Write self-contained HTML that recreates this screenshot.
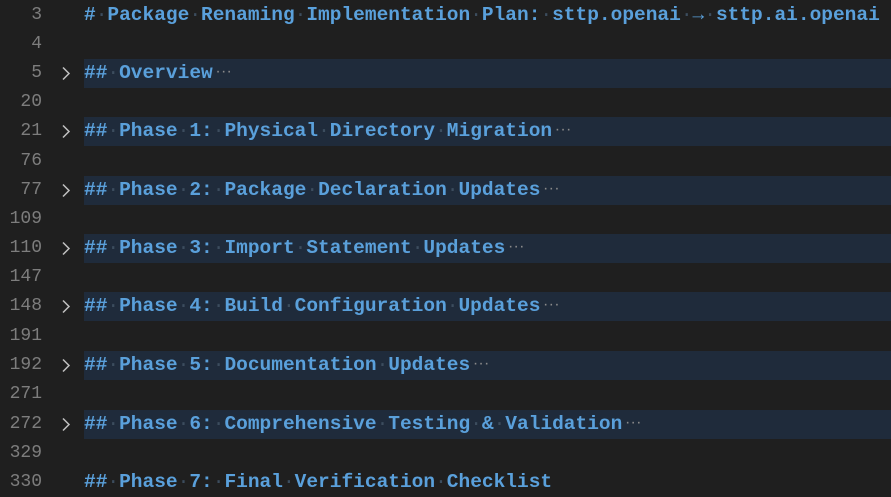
<!DOCTYPE html>
<html><head><style>
body{margin:0;width:891px;height:496px;background:#1f1f1f;overflow:hidden;font-family:"Liberation Mono",monospace;}
.r{position:absolute;left:0;width:891px;height:29px;}
.n{position:absolute;right:849px;top:0;line-height:29px;font-size:18px;color:#7d7d7d;}
.c{position:absolute;left:59px;top:7px;width:14px;height:15px;}
.t{position:absolute;left:84px;top:0;right:0;height:29px;line-height:29px;font-size:19.5px;font-weight:bold;color:#5aa0db;white-space:pre;}
.b{background:#1f2b3b;}
.d{color:#3c4d5e;font-weight:normal;}
.e{color:#8a8a8a;font-size:11px;font-weight:bold;vertical-align:3px;margin-left:2px;letter-spacing:-1px;}
</style></head><body>
<div class="r" style="top:1px"><span class="n">3</span><div class="t">#<span class="d">·</span>Package<span class="d">·</span>Renaming<span class="d">·</span>Implementation<span class="d">·</span>Plan:<span class="d">·</span>sttp.openai<span class="d">·</span>→<span class="d">·</span>sttp.ai.openai</div></div>
<div class="r" style="top:30px"><span class="n">4</span></div>
<div class="r" style="top:59px"><span class="n">5</span><svg class="c" viewBox="0 0 14 15"><path d="M4 1.5L10 7.5L4 13.5" stroke="#c0c0c0" stroke-width="1.5" fill="none"/></svg><div class="t b">##<span class="d">·</span>Overview<span class="e">···</span></div></div>
<div class="r" style="top:88px"><span class="n">20</span></div>
<div class="r" style="top:117px"><span class="n">21</span><svg class="c" viewBox="0 0 14 15"><path d="M4 1.5L10 7.5L4 13.5" stroke="#c0c0c0" stroke-width="1.5" fill="none"/></svg><div class="t b">##<span class="d">·</span>Phase<span class="d">·</span>1:<span class="d">·</span>Physical<span class="d">·</span>Directory<span class="d">·</span>Migration<span class="e">···</span></div></div>
<div class="r" style="top:147px"><span class="n">76</span></div>
<div class="r" style="top:176px"><span class="n">77</span><svg class="c" viewBox="0 0 14 15"><path d="M4 1.5L10 7.5L4 13.5" stroke="#c0c0c0" stroke-width="1.5" fill="none"/></svg><div class="t b">##<span class="d">·</span>Phase<span class="d">·</span>2:<span class="d">·</span>Package<span class="d">·</span>Declaration<span class="d">·</span>Updates<span class="e">···</span></div></div>
<div class="r" style="top:205px"><span class="n">109</span></div>
<div class="r" style="top:234px"><span class="n">110</span><svg class="c" viewBox="0 0 14 15"><path d="M4 1.5L10 7.5L4 13.5" stroke="#c0c0c0" stroke-width="1.5" fill="none"/></svg><div class="t b">##<span class="d">·</span>Phase<span class="d">·</span>3:<span class="d">·</span>Import<span class="d">·</span>Statement<span class="d">·</span>Updates<span class="e">···</span></div></div>
<div class="r" style="top:263px"><span class="n">147</span></div>
<div class="r" style="top:292px"><span class="n">148</span><svg class="c" viewBox="0 0 14 15"><path d="M4 1.5L10 7.5L4 13.5" stroke="#c0c0c0" stroke-width="1.5" fill="none"/></svg><div class="t b">##<span class="d">·</span>Phase<span class="d">·</span>4:<span class="d">·</span>Build<span class="d">·</span>Configuration<span class="d">·</span>Updates<span class="e">···</span></div></div>
<div class="r" style="top:322px"><span class="n">191</span></div>
<div class="r" style="top:351px"><span class="n">192</span><svg class="c" viewBox="0 0 14 15"><path d="M4 1.5L10 7.5L4 13.5" stroke="#c0c0c0" stroke-width="1.5" fill="none"/></svg><div class="t b">##<span class="d">·</span>Phase<span class="d">·</span>5:<span class="d">·</span>Documentation<span class="d">·</span>Updates<span class="e">···</span></div></div>
<div class="r" style="top:380px"><span class="n">271</span></div>
<div class="r" style="top:410px"><span class="n">272</span><svg class="c" viewBox="0 0 14 15"><path d="M4 1.5L10 7.5L4 13.5" stroke="#c0c0c0" stroke-width="1.5" fill="none"/></svg><div class="t b">##<span class="d">·</span>Phase<span class="d">·</span>6:<span class="d">·</span>Comprehensive<span class="d">·</span>Testing<span class="d">·</span>&amp;<span class="d">·</span>Validation<span class="e">···</span></div></div>
<div class="r" style="top:439px"><span class="n">329</span></div>
<div class="r" style="top:468px"><span class="n">330</span><div class="t">##<span class="d">·</span>Phase<span class="d">·</span>7:<span class="d">·</span>Final<span class="d">·</span>Verification<span class="d">·</span>Checklist</div></div>
</body></html>
